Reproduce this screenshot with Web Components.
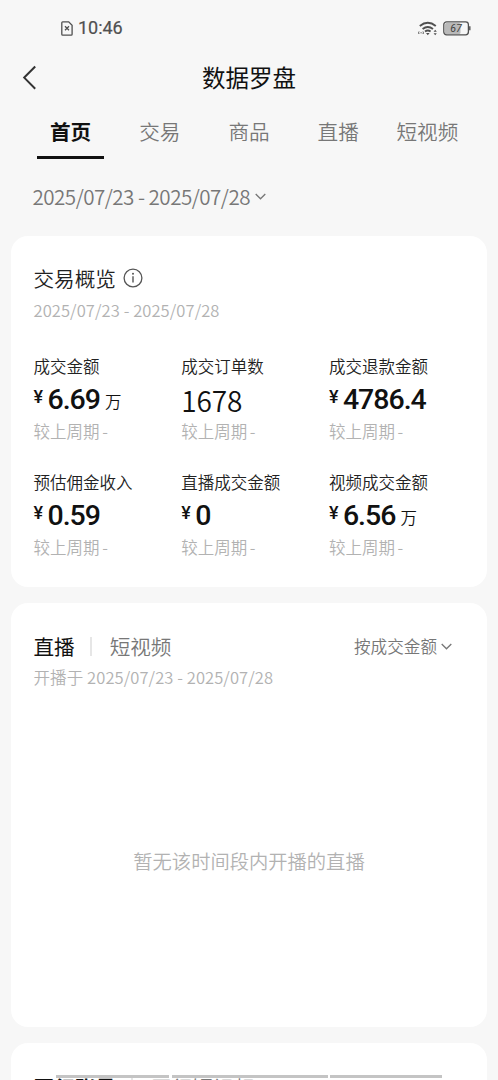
<!DOCTYPE html>
<html lang="zh-CN"><head><meta charset="utf-8"><title>数据罗盘</title>
<style>html,body{margin:0;height:1080px;overflow:hidden;background:#f7f7f7}</style></head>
<body><compass-page></compass-page>
<script>
const define=(name,css,html)=>customElements.define(name,class extends HTMLElement{
  constructor(){super();const r=this.attachShadow({mode:'open'});
    r.innerHTML='<style>:host{display:block;box-sizing:border-box}*{box-sizing:border-box}'+css+'</style>'+(typeof html==='function'?html(this):html);}
});
define('status-bar',`
:host{height:47px;padding:17px 27px 0 61px;display:flex;justify-content:space-between;color:#505050}
div{display:flex;align-items:center;height:22px}
.time{font:400 18px/22px Roboto,sans-serif;letter-spacing:-.05px;margin-left:5px;-webkit-text-stroke:.2px}
.wifi{margin-right:5px}`,`
<div><svg width="12" height="15" viewBox="0 0 12 15" fill="none" stroke="currentColor"><path stroke-width="1.3" d="M1.7.9h6l3.4 3.4v8.9q0 .9-.9.9H1.7q-.9 0-.9-.9V1.8q0-.9.9-.9z"/><path stroke-width="1.3" d="m4 5.3 4 4m0-4-4 4"/></svg><span class="time">10:46</span></div>
<div><svg class="wifi" width="20" height="15" viewBox="0 0 20 15" fill="none" stroke="currentColor"><path stroke-width="1.9" d="M1.8 5.1q8-6.5 16 0M4.6 8q5.2-4 10.4 0"/><path stroke-width="1.8" d="M7 10.5q2.8-2 5.6 0"/><path fill="currentColor" stroke="none" d="m8 12 1.8 2.2 1.8-2.2zM15.6 10.7l1.6-2 1.6 2zm0 1.6 1.6 2 1.6-2z"/><path stroke-width="1" d="M1 10.5q-.8 1.2 0 2.5m4-2.5q.8 1.2 0 2.5M2.5 11.8h1.2"/></svg>
<svg width="28" height="15" viewBox="0 0 28 15"><rect x="2" y="2" width="15.5" height="11" rx="1.5" fill="#b9b9b9"/><rect x=".8" y=".8" width="24.6" height="13" rx="2.8" fill="none" stroke="currentColor" stroke-width="1.3"/><path stroke="currentColor" stroke-width="1.4" d="M26.8 5.3v4"/><text x="13.1" y="11.1" text-anchor="middle" font-family="Roboto,sans-serif" font-size="10.5" font-weight="400" font-style="italic" fill="#444">67</text></svg></div>`);
define('title-bar',`
:host{height:61px;display:grid;grid-template-columns:60px 1fr 60px;align-items:center}
svg{margin-left:22px;display:block}
h1{margin:0;padding-bottom:1px;text-align:center;font-size:23.5px;font-weight:400;line-height:34px;color:#111}`,`
<svg width="16" height="26" viewBox="0 0 16 26" fill="none" stroke="#333" stroke-width="2"><path d="M13.2 1.5 2.2 12.6l11 11.1"/></svg><h1><slot></slot></h1>`);
define('tab-bar',`:host{height:51px;display:flex;padding:0 26px}`,`<slot></slot>`);
define('tab-item',`
:host{flex:0 0 89.2px;display:flex;flex-direction:column;align-items:center;font-size:20.6px;line-height:30px;color:#777;padding-top:8px;white-space:nowrap}
:host([active]){font-weight:700;color:#111}
i{display:none;width:67px;height:3px;margin-top:9.5px;background:#111}
:host([active]) i{display:block}`,`<span><slot></slot></span><i></i>`);
define('down-chevron',`:host{display:inline-block;width:11px;height:7px}svg{display:block}`,`<svg width="11" height="7" viewBox="0 0 11 7" fill="none" stroke="#777" stroke-width="1.3"><path d="m.7 1 4.8 4.8L10.3 1"/></svg>`);
define('date-range',`:host{height:77px;display:flex;align-items:flex-start;padding:22px 0 0 32.5px;font-size:20.6px;line-height:30px;letter-spacing:-.52px;color:#777}down-chevron{margin:12px 0 0 5px}`,`<span><slot></slot></span><down-chevron></down-chevron>`);
define('data-card',`:host{margin:0 11px 17px;background:#fff;border-radius:17px;padding:0 22.5px}`,`<slot></slot>`);
define('card-title',`
:host{padding-top:27px;height:89px}
div{display:flex;align-items:center;height:30px;font-size:20.6px;line-height:30px;color:#222}
svg{margin-left:7px}
p{margin:5px 0 0;font-size:16.55px;line-height:24px;letter-spacing:.08px;color:#b2b2b2}`,`
<div><slot></slot><svg width="20" height="20" viewBox="0 0 20 20" fill="none" stroke="#555"><circle cx="10" cy="10" r="8.9" stroke-width="1.3"/><path stroke-width="1.4" d="M10 8.3v6.2"/><circle cx="10" cy="5.8" r="1" fill="#555" stroke="none"/></svg></div><p><slot name="sub"></slot></p>`);
define('metric-grid',`:host{display:grid;grid-template-columns:147.7px 147.7px 1fr;grid-auto-rows:116.3px;padding-top:29px}`,`<slot></slot>`);
define('metric-cell',`
:host{white-space:nowrap;color:#222}
.l{font-size:16.5px;line-height:24px;height:24px}
.v{height:38px;display:flex;align-items:baseline;line-height:38px;margin-top:3px;color:#111}
.y{font:500 18px/38px Roboto,sans-serif;width:14px;position:relative;top:-6px}
.n{font:500 28.5px/38px Roboto,sans-serif;letter-spacing:-1px}
.u{font-size:16.5px;margin-left:5px;position:relative;top:-1px}
.p .n{font:350 28px/38px "Noto Sans CJK SC",sans-serif;letter-spacing:-.1px}
.c{font-size:16.5px;line-height:24px;height:24px;margin-top:0;color:#b2b2b2;word-spacing:-1px}`,
el=>`<div class="l">${el.getAttribute('label')}</div><div class="v ${el.hasAttribute('plain')?'p':''}">${el.hasAttribute('plain')?'':'<span class="y">¥</span>'}<span class="n">${el.getAttribute('value')}</span>${el.hasAttribute('unit')?'<span class="u">'+el.getAttribute('unit')+'</span>':''}</div><div class="c">较上周期 -</div>`);
define('live-head',`
:host{padding-top:28px;height:90px}
.r{display:flex;align-items:center;height:30px;font-size:20.6px;line-height:30px;color:#777}
b{font-weight:400;color:#111}
i{width:2px;height:19px;background:#e6e6e6;margin:0 18px 0 15px}
.s{margin-left:auto;font-size:16.6px;margin-right:4px}
down-chevron{margin-right:12.5px}
p{margin:4px 0 0;font-size:16.55px;line-height:24px;letter-spacing:.08px;color:#b2b2b2}`,`
<div class="r"><b>直播</b><i></i><span>短视频</span><span class="s">按成交金额</span><down-chevron></down-chevron></div><p>开播于 2025/07/23 - 2025/07/28</p>`);
define('empty-note',`:host{height:336px;display:flex;align-items:center;justify-content:center;font-size:19.3px;color:#b2b2b2}`,`<slot></slot>`);
define('next-head',`
:host{padding-top:29px;height:60px;display:flex;font-size:20.6px;line-height:30px;color:#777;white-space:nowrap}
b{color:#111}
i{width:2px;height:19px;background:#e6e6e6;margin:6px 18px 0 15px}`,`<b>同行账号</b><i></i><span>同行短视频</span>`);
define('nav-lines',`:host{position:absolute;left:56px;top:1075px;width:386px;height:3px;display:grid;grid-template-columns:113px 156px 112px;column-gap:2.5px}i{background:#c4c4c4}`,`<i></i><i></i><i></i>`);
define('compass-page',`
:host{width:498px;height:1080px;overflow:hidden;position:relative;background:#f7f7f7;font-family:"Noto Sans CJK SC",sans-serif;font-weight:350}
.a{height:350.5px;margin-bottom:16.5px}.b{height:423.5px;margin-bottom:16.5px}.c{height:100px}`,`
<status-bar></status-bar><title-bar>数据罗盘</title-bar>
<tab-bar><tab-item active>首页</tab-item><tab-item>交易</tab-item><tab-item>商品</tab-item><tab-item>直播</tab-item><tab-item>短视频</tab-item></tab-bar>
<date-range>2025/07/23 - 2025/07/28</date-range>
<data-card class="a"><card-title>交易概览<span slot="sub">2025/07/23 - 2025/07/28</span></card-title>
<metric-grid><metric-cell label="成交金额" value="6.69" unit="万"></metric-cell><metric-cell label="成交订单数" value="1678" plain></metric-cell><metric-cell label="成交退款金额" value="4786.4"></metric-cell><metric-cell label="预估佣金收入" value="0.59"></metric-cell><metric-cell label="直播成交金额" value="0"></metric-cell><metric-cell label="视频成交金额" value="6.56" unit="万"></metric-cell></metric-grid></data-card>
<data-card class="b"><live-head></live-head><empty-note>暂无该时间段内开播的直播</empty-note></data-card>
<data-card class="c"><next-head></next-head></data-card><nav-lines></nav-lines>`);
</script></body></html>
